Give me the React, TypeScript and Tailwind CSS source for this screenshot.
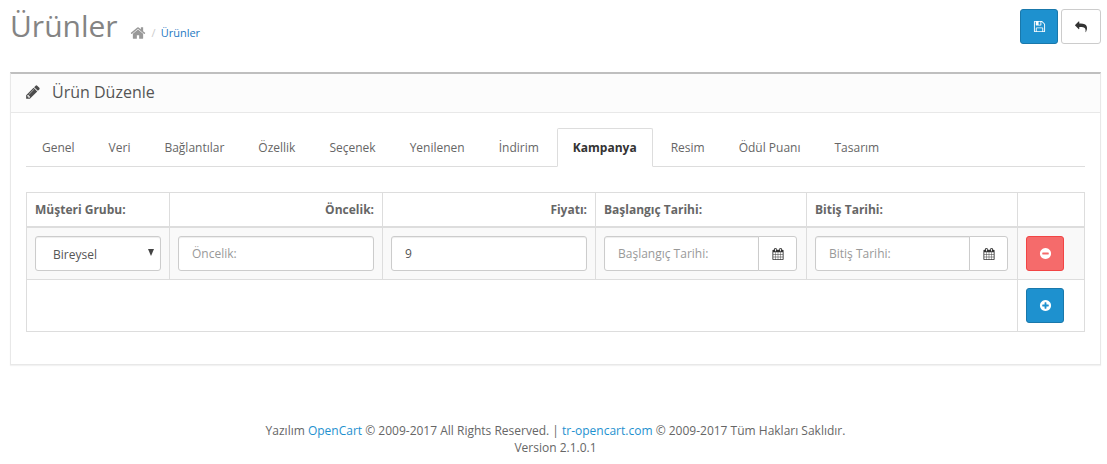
import React, { useState } from "react";

const ICONS = {
  home: "M1472 992v480q0 26-19 45t-45 19h-384v-384h-256v384h-384q-26 0-45-19t-19-45v-480q0-1 .5-3t.5-3l575-474 575 474q1 2 1 6zm223-69l-62 74q-8 9-21 11h-3q-13 0-21-7l-692-577-692 577q-12 8-24 7-13-2-21-11l-62-74q-8-10-7-23.5t11-21.5l719-599q32-26 76-26t76 26l244 204v-195q0-14 9-23t23-9h192q14 0 23 9t9 23v408l219 182q10 8 11 21.5t-7 23.5z",
  save: "M512 1536h768v-384h-768v384zm896 0h128v-896q0-14-10-38.5t-20-34.5l-281-281q-10-10-34-20t-39-10v416q0 40-28 68t-68 28h-576q-40 0-68-28t-28-68v-416h-128v1280h128v-416q0-40 28-68t68-28h832q40 0 68 28t28 68v416zm-384-928v-320q0-13-9.5-22.5t-22.5-9.5h-192q-13 0-22.5 9.5t-9.5 22.5v320q0 13 9.5 22.5t22.5 9.5h192q13 0 22.5-9.5t9.5-22.5zm640 32v928q0 40-28 68t-68 28h-1344q-40 0-68-28t-28-68v-1344q0-40 28-68t68-28h928q40 0 88 20t76 48l280 280q28 28 48 76t20 88z",
  reply:
    "M1792 1120q0 166-127 451-3 7-10.5 24t-13.5 30-13 22q-12 17-28 17-15 0-23.5-10t-8.5-25q0-9 2.5-26.5t2.5-23.5q5-68 5-123 0-101-17.5-181t-48.5-138.5-80-101-105.5-69.5-133-42.5-154-21.5-175.5-6h-224v256q0 26-19 45t-45 19-45-19l-512-512q-19-19-19-45t19-45l512-512q19-19 45-19t45 19 19 45v256h224q713 0 875 403 53 134 53 333z",
  pencil:
    "M491 1536l91-91-235-235-91 91v107h128v128h107zm523-928q0-22-22-22-10 0-17 7l-542 542q-7 7-7 17 0 22 22 22 10 0 17-7l542-542q7-7 7-17zm-54-192l416 416-832 832h-416v-416zm683 96q0 53-37 90l-166 166-416-416 166-165q36-38 90-38 53 0 91 38l235 234q37 39 37 91z",
  calendar:
    "M192 1664h288v-288h-288v288zm352 0h320v-288h-320v288zm-352-352h288v-320h-288v320zm352 0h320v-320h-320v320zm-352-384h288v-288h-288v288zm736 736h320v-288h-320v288zm-384-736h320v-288h-320v288zm768 736h288v-288h-288v288zm-384-352h320v-320h-320v320zm-352-864v-288q0-13-9.5-22.5t-22.5-9.5h-64q-13 0-22.5 9.5t-9.5 22.5v288q0 13 9.5 22.5t22.5 9.5h64q13 0 22.5-9.5t9.5-22.5zm736 864h288v-320h-288v320zm-384-384h320v-288h-320v288zm384 0h288v-288h-288v288zm32-480v-288q0-13-9.5-22.5t-22.5-9.5h-64q-13 0-22.5 9.5t-9.5 22.5v288q0 13 9.5 22.5t22.5 9.5h64q13 0 22.5-9.5t9.5-22.5zm384-64v1280q0 52-38 90t-90 38h-1408q-52 0-90-38t-38-90v-1280q0-52 38-90t90-38h128v-96q0-66 47-113t113-47h64q66 0 113 47t47 113v96h384v-96q0-66 47-113t113-47h64q66 0 113 47t47 113v96h128q52 0 90 38t38 90z",
  minus:
    "M1344 960v-128q0-26-19-45t-45-19h-768q-26 0-45 19t-19 45v128q0 26 19 45t45 19h768q26 0 45-19t19-45zm320-64q0 209-103 385.5t-279.5 279.5-385.5 103-385.5-103-279.5-279.5-103-385.5 103-385.5 279.5-279.5 385.5-103 385.5 103 279.5 279.5 103 385.5z",
  plus: "M1344 960v-128q0-26-19-45t-45-19h-256v-256q0-26-19-45t-45-19h-128q-26 0-45 19t-19 45v256h-256q-26 0-45 19t-19 45v128q0 26 19 45t45 19h256v256q0 26 19 45t45 19h128q26 0 45-19t19-45v-256h256q26 0 45-19t19-45zm320-64q0 209-103 385.5t-279.5 279.5-385.5 103-385.5-103-279.5-279.5-103-385.5 103-385.5 279.5-279.5 385.5-103 385.5 103 279.5 279.5 103 385.5z",
};

function Icon({ name, className = "size-3" }: { name: keyof typeof ICONS; className?: string }) {
  return (
    <svg viewBox="0 0 1792 1792" fill="currentColor" aria-hidden="true" className={className}>
      <path d={ICONS[name]} />
    </svg>
  );
}

const buttonBase = "inline-flex h-[35px] items-center justify-center rounded-[3px] border";
const primary = "border-[#1978ab] bg-[#1e91cf] text-white";
const danger = "border-[#f24545] bg-[#f56b6b] text-white";
const field =
  "h-[35px] w-full min-w-0 rounded-[3px] border border-[#ccc] bg-white px-[13px] text-[#555] shadow-[inset_0_1px_1px_rgba(0,0,0,0.075)] outline-none placeholder:text-[#999] focus:border-[#66afe9]";
const cell = "border border-[#ddd] p-2";

const TABS = [
  "Genel",
  "Veri",
  "Bağlantılar",
  "Özellik",
  "Seçenek",
  "Yenilenen",
  "İndirim",
  "Kampanya",
  "Resim",
  "Ödül Puanı",
  "Tasarım",
];

function DateField({ label }: { label: string }) {
  return (
    <div className="flex pr-px">
      <input
        type="text"
        aria-label={label}
        placeholder={label}
        className={`${field} flex-1 rounded-r-none`}
      />
      <button
        type="button"
        aria-label={`${label} takvim`}
        className={`${buttonBase} -ml-px w-[39px] shrink-0 rounded-l-none border-[#ccc] bg-white text-[#333]`}
      >
        <Icon name="calendar" />
      </button>
    </div>
  );
}

export default function App() {
  const [active, setActive] = useState("Kampanya");
  const [price, setPrice] = useState("9");

  return (
    <div className="bg-white pr-[6px] pl-[10px] font-['Open_Sans',sans-serif] text-[12px] leading-[17px] text-[#666]">
      <header className="flex items-start justify-between pt-2">
        <div className="flex items-end gap-3">
          <h1 className="text-[30px] leading-9 text-[#848484]">Ürünler</h1>
          <nav aria-label="Breadcrumb" className="pb-[3px]">
            <ol className="flex items-end">
              <li>
                <a href="#" aria-label="Ana sayfa" className="block text-[#999]">
                  <Icon name="home" className="size-4" />
                </a>
              </li>
              <li className="flex items-center text-[11px]">
                <span className="pr-[5px] pl-[6px] text-[#ccc]">/</span>
                <a href="#" className="text-[#1e78c2]">
                  Ürünler
                </a>
              </li>
            </ol>
          </nav>
        </div>
        <div className="flex gap-[3px] pt-px">
          <button type="button" aria-label="Kaydet" className={`${buttonBase} ${primary} w-[38px]`}>
            <Icon name="save" className="size-[13px]" />
          </button>
          <a
            href="#"
            aria-label="Geri"
            className={`${buttonBase} w-10 border-[#ccc] bg-white text-[#333]`}
          >
            <Icon name="reply" />
          </a>
        </div>
      </header>

      <main className="mt-7 border border-t-2 border-[#e8e8e8] border-t-[#bfbfbf] shadow-[0_1px_1px_rgba(0,0,0,0.05)]">
        <div className="flex h-[39px] items-center gap-[11px] border-b border-[#e8e8e8] bg-[#fcfcfc] px-[14px] pb-[2px] text-[#4c4c4c]">
          <Icon name="pencil" className="size-4" />
          <h2 className="text-[16px] text-[#555]">Ürün Düzenle</h2>
        </div>

        <div className="px-[15px] pt-[15px] pb-8">
          <div role="tablist" className="flex gap-[2px] border-b border-[#ddd]">
            {TABS.map((tab) => (
              <button
                key={tab}
                type="button"
                role="tab"
                aria-selected={tab === active}
                onClick={() => setActive(tab)}
                className={
                  tab === active
                    ? "-mb-px rounded-t-[2px] border border-[#ddd] border-b-white bg-white px-[15px] py-[10px] font-bold text-[#333]"
                    : "-mb-px border border-transparent px-[15px] py-[10px]"
                }
              >
                {tab}
              </button>
            ))}
          </div>

          <table className="mt-[25px] w-full table-fixed border-collapse border border-[#ddd]">
            <colgroup>
              <col className="w-[143px]" />
              <col />
              <col />
              <col className="w-[211px]" />
              <col className="w-[211px]" />
              <col className="w-[67px]" />
            </colgroup>
            <thead>
              <tr className="border-b-2 border-[#ddd] text-left">
                <th className="border border-b-2 border-[#ddd] p-2">Müşteri Grubu:</th>
                <th className="border border-b-2 border-[#ddd] p-2 text-right">Öncelik:</th>
                <th className="border border-b-2 border-[#ddd] p-2 text-right">Fiyatı:</th>
                <th className="border border-b-2 border-[#ddd] p-2">Başlangıç Tarihi:</th>
                <th className="border border-b-2 border-[#ddd] p-2">Bitiş Tarihi:</th>
                <td className="border border-b-2 border-[#ddd] p-2" />
              </tr>
            </thead>
            <tbody>
              <tr className="bg-[#f9f9f9]">
                <td className={cell}>
                  <div className="relative">
                    <select
                      aria-label="Müşteri Grubu"
                      className={`${field} block appearance-none pt-[2px] pl-[17px]`}
                    >
                      <option>Bireysel</option>
                    </select>
                    <svg
                      viewBox="0 0 6 7"
                      aria-hidden="true"
                      className="pointer-events-none absolute top-[13px] right-[7px] h-[7px] w-[6px] fill-[#444]"
                    >
                      <path d="M0 0h6L3 7z" />
                    </svg>
                  </div>
                </td>
                <td className={cell}>
                  <input
                    type="text"
                    aria-label="Öncelik"
                    placeholder="Öncelik:"
                    className={`${field} block`}
                  />
                </td>
                <td className={cell}>
                  <input
                    type="text"
                    aria-label="Fiyatı"
                    value={price}
                    onChange={(e) => setPrice(e.target.value)}
                    className={`${field} block`}
                  />
                </td>
                <td className={cell}>
                  <DateField label="Başlangıç Tarihi:" />
                </td>
                <td className={cell}>
                  <DateField label="Bitiş Tarihi:" />
                </td>
                <td className={cell}>
                  <button
                    type="button"
                    aria-label="Kaldır"
                    className={`${buttonBase} ${danger} flex w-[38px]`}
                  >
                    <Icon name="minus" className="size-[13px]" />
                  </button>
                </td>
              </tr>
            </tbody>
            <tfoot>
              <tr>
                <td colSpan={5} className={cell} />
                <td className={cell}>
                  <button
                    type="button"
                    aria-label="Ekle"
                    className={`${buttonBase} ${primary} flex w-[38px]`}
                  >
                    <Icon name="plus" className="size-[13px]" />
                  </button>
                </td>
              </tr>
            </tfoot>
          </table>
        </div>
      </main>

      <footer className="mt-[57px] pb-2 text-center">
        <p>
          Yazılım{" "}
          <a href="#" className="text-[#1e91cf]">
            OpenCart
          </a>{" "}
          © 2009-2017 All Rights Reserved. |{" "}
          <a href="#" className="text-[#1e91cf]">
            tr-opencart.com
          </a>{" "}
          © 2009-2017 Tüm Hakları Saklıdır.
        </p>
        <p>Version 2.1.0.1</p>
      </footer>
    </div>
  );
}
